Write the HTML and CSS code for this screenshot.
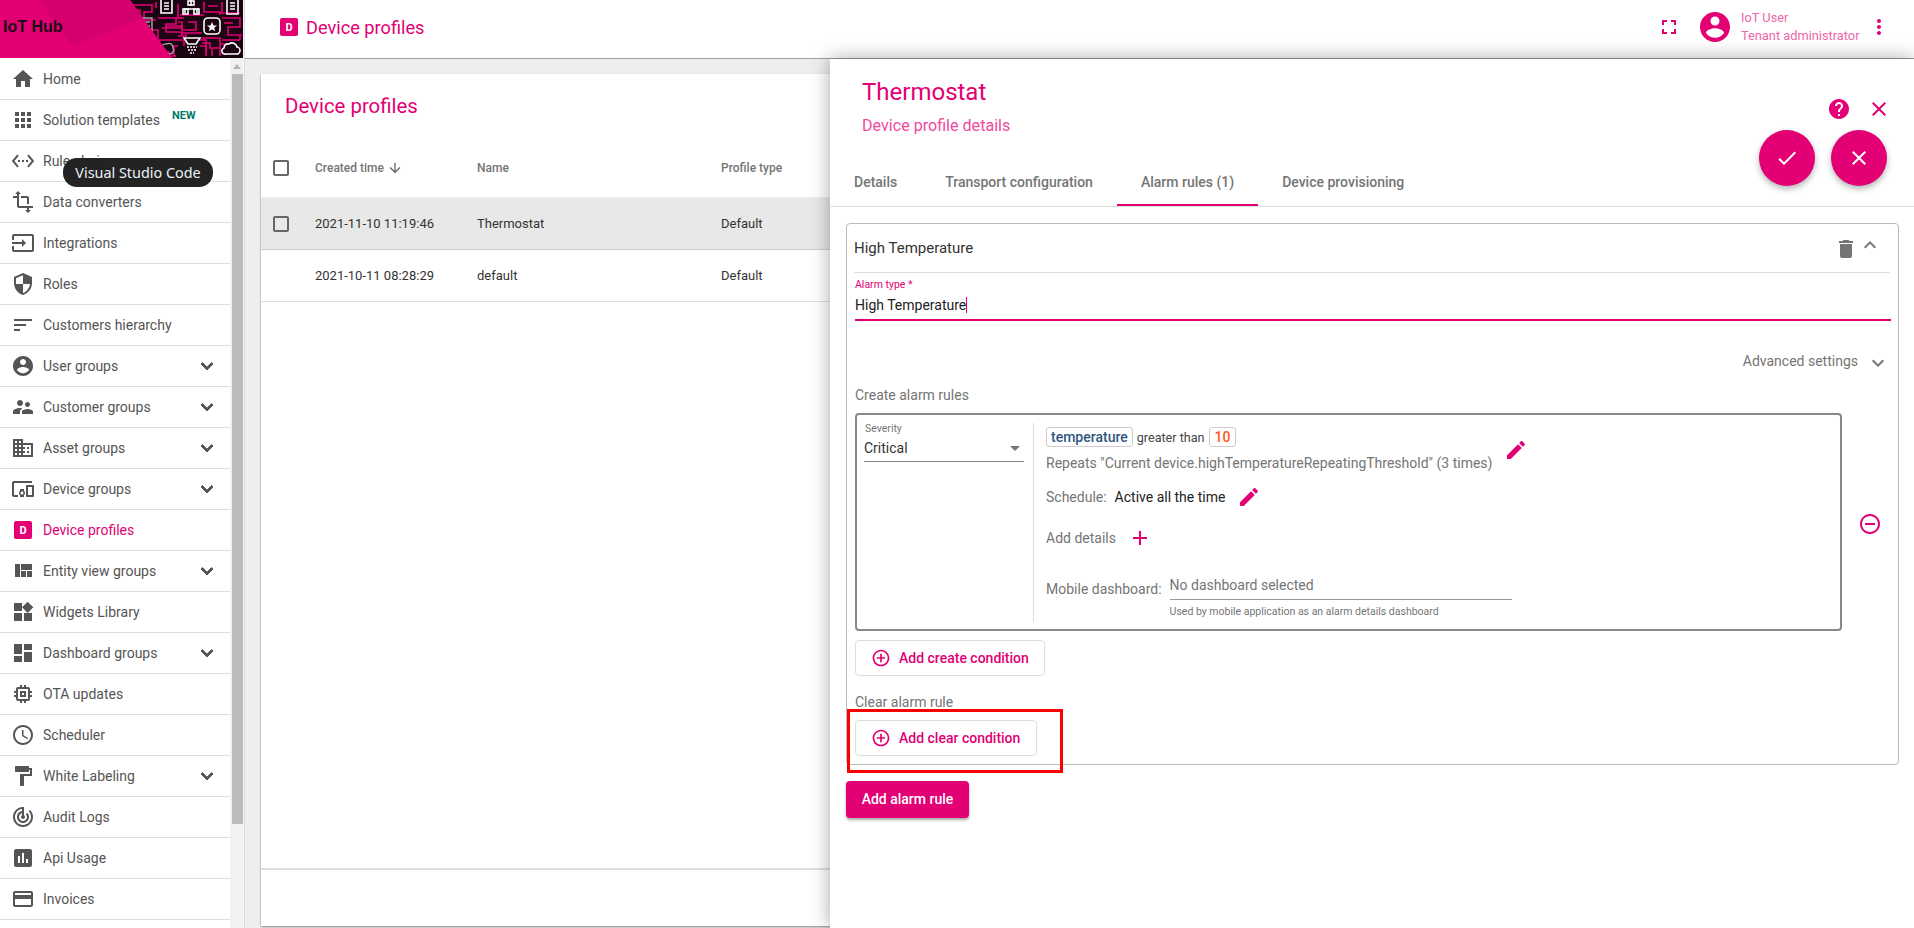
FILE: index.html
```html
<!doctype html>
<html>

<head>
    <meta charset="utf-8">
    <title>Device profiles</title>
    <link rel="stylesheet" href="styles.css">
</head>

<body>
    <svg class="sprite" xmlns="http://www.w3.org/2000/svg">
        <symbol id="i-home" viewBox="0 0 24 24"><path d="M10 20v-6h4v6h5v-8h3L12 3 2 12h3v8z"/></symbol>
        <symbol id="i-apps" viewBox="0 0 24 24"><path d="M4 8h4V4H4v4zm6 12h4v-4h-4v4zm-6 0h4v-4H4v4zm0-6h4v-4H4v4zm6 0h4v-4h-4v4zm6-10v4h4V4h-4zm-6 4h4V4h-4v4zm6 6h4v-4h-4v4zm0 6h4v-4h-4v4z"/></symbol>
        <symbol id="i-ethernet" viewBox="0 0 24 24"><path d="M7.77 6.76L6.23 5.48.82 12l5.41 6.52 1.54-1.28L3.42 12l4.35-5.24zM7 13h2v-2H7v2zm10-2h-2v2h2v-2zm-6 2h2v-2h-2v2zm6.77-7.52l-1.54 1.28L20.58 12l-4.35 5.24 1.54 1.28L23.18 12l-5.41-6.52z"/></symbol>
        <symbol id="i-transform" viewBox="0 0 24 24"><path d="M22 18v-2H8V4h2L7 1 4 4h2v2H2v2h4v8c0 1.1.9 2 2 2h8v2h-2l3 3 3-3h-2v-2h4zM10 8h6v6h2V8c0-1.1-.9-2-2-2h-6v2z"/></symbol>
        <symbol id="i-input" viewBox="0 0 24 24"><path d="M21 3.01H3c-1.1 0-2 .9-2 2V9h2V4.99h18v14.03H3V15H1v4.01c0 1.1.9 1.98 2 1.98h18c1.1 0 2-.88 2-1.98v-14c0-1.11-.9-2-2-2zM11 16l4-4-4-4v3H1v2h10v3z"/></symbol>
        <symbol id="i-security" viewBox="0 0 24 24"><path d="M12 1L3 5v6c0 5.55 3.84 10.74 9 12 5.16-1.26 9-6.45 9-12V5l-9-4zm0 10.99h7c-.53 4.12-3.28 7.79-7 8.94V12H5V6.3l7-3.11v8.8z"/></symbol>
        <symbol id="i-sort" viewBox="0 0 24 24"><path d="M3 18h6v-2H3v2zM3 6v2h18V6H3zm0 7h12v-2H3v2z"/></symbol>
        <symbol id="i-account" viewBox="0 0 24 24"><path d="M12 2C6.48 2 2 6.48 2 12s4.48 10 10 10 10-4.48 10-10S17.52 2 12 2zm0 3c1.66 0 3 1.34 3 3s-1.34 3-3 3-3-1.34-3-3 1.34-3 3-3zm0 14.2c-2.5 0-4.71-1.28-6-3.22.03-1.99 4-3.08 6-3.08 1.99 0 5.97 1.09 6 3.08-1.29 1.94-3.5 3.22-6 3.22z"/></symbol>
        <symbol id="i-people" viewBox="0 0 24 24"><path d="M16.5 12c1.38 0 2.49-1.12 2.49-2.5S17.88 7 16.5 7C15.12 7 14 8.12 14 9.5s1.12 2.5 2.5 2.5zM9 11c1.66 0 2.99-1.34 2.99-3S10.66 5 9 5C7.34 5 6 6.34 6 8s1.34 3 3 3zm7.5 3c-1.83 0-5.5.92-5.5 2.75V19h11v-2.25c0-1.83-3.67-2.75-5.5-2.75zM9 13c-2.33 0-7 1.17-7 3.5V19h7v-2.25c0-.85.33-2.34 2.37-3.47C10.5 13.1 9.66 13 9 13z"/></symbol>
        <symbol id="i-domain" viewBox="0 0 24 24"><path d="M12 7V3H2v18h20V7H10zM6 19H4v-2h2v2zm0-4H4v-2h2v2zm0-4H4V9h2v2zm0-4H4V5h2v2zm4 12H8v-2h2v2zm0-4H8v-2h2v2zm0-4H8V9h2v2zm0-4H8V5h2v2zm10 12h-8v-2h2v-2h-2v-2h2v-2h-2V9h8v10zm-2-8h-2v2h2v-2zm0 4h-2v2h2v-2z"/></symbol>
        <symbol id="i-devices" viewBox="0 0 24 24"><path d="M3 6h18V4H3c-1.1 0-2 .9-2 2v12c0 1.1.9 2 2 2h4v-2H3V6zm10 6H9v1.78c-.61.55-1 1.33-1 2.22s.39 1.67 1 2.22V20h4v-1.78c.61-.55 1-1.34 1-2.22s-.39-1.67-1-2.22V12zm-2 5.5c-.83 0-1.5-.67-1.5-1.5s.67-1.5 1.5-1.5 1.5.67 1.5 1.5-.67 1.5-1.5 1.5zM22 8h-6c-.5 0-1 .5-1 1v10c0 .5.5 1 1 1h6c.5 0 1-.5 1-1V9c0-.5-.5-1-1-1zm-1 10h-4v-8h4v8z"/></symbol>
        <symbol id="i-quilt" viewBox="0 0 24 24"><path d="M10 18h5v-6h-5v6zm-6 0h5V5H4v13zm12 0h5v-6h-5v6zM10 5v6h11V5H10z"/></symbol>
        <symbol id="i-widgets" viewBox="0 0 24 24"><path d="M13 13v8h8v-8h-8zM3 21h8v-8H3v8zM3 3v8h8V3H3zm13.66-1.31L11 7.34 16.66 13l5.66-5.66-5.66-5.65z"/></symbol>
        <symbol id="i-dashboard" viewBox="0 0 24 24"><path d="M3 13h8V3H3v10zm0 8h8v-6H3v6zm10 0h8V11h-8v10zm0-18v6h8V3h-8z"/></symbol>
        <symbol id="i-memory" viewBox="0 0 24 24"><path d="M15 9H9v6h6V9zm-2 4h-2v-2h2v2zm8-2V9h-2V7c0-1.1-.9-2-2-2h-2V3h-2v2h-2V3H9v2H7c-1.1 0-2 .9-2 2v2H3v2h2v2H3v2h2v2c0 1.1.9 2 2 2h2v2h2v-2h2v2h2v-2h2c1.1 0 2-.9 2-2v-2h2v-2h-2v-2h2zm-4 6H7V7h10v10z"/></symbol>
        <symbol id="i-schedule" viewBox="0 0 24 24"><path d="M11.99 2C6.47 2 2 6.48 2 12s4.47 10 9.99 10C17.52 22 22 17.52 22 12S17.52 2 11.99 2zM12 20c-4.42 0-8-3.58-8-8s3.58-8 8-8 8 3.58 8 8-3.58 8-8 8zm.5-13H11v6l5.25 3.15.75-1.23-4.5-2.67z"/></symbol>
        <symbol id="i-paint" viewBox="0 0 24 24"><path d="M18 4V3c0-.55-.45-1-1-1H5c-.55 0-1 .45-1 1v4c0 .55.45 1 1 1h12c.55 0 1-.45 1-1V6h1v4H9v11c0 .55.45 1 1 1h2c.55 0 1-.45 1-1v-9h8V4h-3z"/></symbol>
        <symbol id="i-track" viewBox="0 0 24 24"><path d="M19.07 4.93l-1.41 1.41C19.1 7.79 20 9.79 20 12c0 4.42-3.58 8-8 8s-8-3.58-8-8c0-4.08 3.05-7.44 7-7.93v2.02C8.16 6.57 6 9.03 6 12c0 3.31 2.69 6 6 6s6-2.69 6-6c0-1.66-.67-3.16-1.76-4.24l-1.41 1.41C15.55 9.9 16 10.9 16 12c0 2.21-1.79 4-4 4s-4-1.79-4-4c0-1.86 1.28-3.41 3-3.86v2.14c-.6.35-1 .98-1 1.72 0 1.1.9 2 2 2s2-.9 2-2c0-.74-.4-1.38-1-1.72V2h-1C6.48 2 2 6.48 2 12s4.48 10 10 10 10-4.48 10-10c0-2.76-1.12-5.26-2.93-7.07z"/></symbol>
        <symbol id="i-chart" viewBox="0 0 24 24"><path d="M19 3H5c-1.1 0-2 .9-2 2v14c0 1.1.9 2 2 2h14c1.1 0 2-.9 2-2V5c0-1.1-.9-2-2-2zM9 17H7v-7h2v7zm4 0h-2V7h2v10zm4 0h-2v-4h2v4z"/></symbol>
        <symbol id="i-card" viewBox="0 0 24 24"><path d="M20 4H4c-1.11 0-1.99.89-1.99 2L2 18c0 1.11.89 2 2 2h16c1.11 0 2-.89 2-2V6c0-1.11-.89-2-2-2zm0 14H4v-6h16v6zm0-10H4V6h16v2z"/></symbol>
        <symbol id="i-more" viewBox="0 0 24 24"><path d="M16.59 8.59L12 13.17 7.41 8.59 6 10l6 6 6-6z"/></symbol>
        <symbol id="i-less" viewBox="0 0 24 24"><path d="M12 8l-6 6 1.41 1.41L12 10.83l4.59 4.58L18 14z"/></symbol>
        <symbol id="i-full" viewBox="0 0 24 24"><path d="M7 14H5v5h5v-2H7v-3zm-2-4h2V7h3V5H5v5zm12 7h-3v2h5v-5h-2v3zM14 5v2h3v3h2V5h-5z"/></symbol>
        <symbol id="i-vert" viewBox="0 0 24 24"><path d="M12 8c1.1 0 2-.9 2-2s-.9-2-2-2-2 .9-2 2 .9 2 2 2zm0 2c-1.1 0-2 .9-2 2s.9 2 2 2 2-.9 2-2-.9-2-2-2zm0 6c-1.1 0-2 .9-2 2s.9 2 2 2 2-.9 2-2-.9-2-2-2z"/></symbol>
        <symbol id="i-help" viewBox="0 0 24 24"><path d="M12 2C6.48 2 2 6.48 2 12s4.48 10 10 10 10-4.48 10-10S17.52 2 12 2zm1 17h-2v-2h2v2zm2.07-7.75l-.9.92C13.45 12.9 13 13.5 13 15h-2v-.5c0-1.1.45-2.1 1.17-2.83l1.24-1.26c.37-.36.59-.86.59-1.41 0-1.1-.9-2-2-2s-2 .9-2 2H8c0-2.21 1.79-4 4-4s4 1.79 4 4c0 .88-.36 1.68-.93 2.25z"/></symbol>
        <symbol id="i-close" viewBox="0 0 24 24"><path d="M19 6.41L17.59 5 12 10.59 6.41 5 5 6.41 10.59 12 5 17.59 6.41 19 12 13.41 17.59 19 19 17.59 13.41 12z"/></symbol>
        <symbol id="i-check" viewBox="0 0 24 24"><path d="M9 16.17L4.83 12l-1.42 1.41L9 19 21 7l-1.41-1.41z"/></symbol>
        <symbol id="i-delete" viewBox="0 0 24 24"><path d="M6 19c0 1.1.9 2 2 2h8c1.1 0 2-.9 2-2V7H6v12zM19 4h-3.5l-1-1h-5l-1 1H5v2h14V4z"/></symbol>
        <symbol id="i-edit" viewBox="0 0 24 24"><path d="M3 17.25V21h3.75L17.81 9.94l-3.75-3.75L3 17.25zM20.71 7.04c.39-.39.39-1.02 0-1.41l-2.34-2.34c-.39-.39-1.02-.39-1.41 0l-1.83 1.83 3.75 3.75 1.83-1.83z"/></symbol>
        <symbol id="i-add" viewBox="0 0 24 24"><path d="M19 13h-6v6h-2v-6H5v-2h6V5h2v6h6v2z"/></symbol>
        <symbol id="i-add-circle" viewBox="0 0 24 24"><path d="M13 7h-2v4H7v2h4v4h2v-4h4v-2h-4V7zm-1-5C6.48 2 2 6.48 2 12s4.48 10 10 10 10-4.48 10-10S17.52 2 12 2zm0 18c-4.41 0-8-3.59-8-8s3.59-8 8-8 8 3.59 8 8-3.59 8-8 8z"/></symbol>
        <symbol id="i-remove-circle" viewBox="0 0 24 24"><path d="M7 11v2h10v-2H7zm5-9C6.48 2 2 6.48 2 12s4.48 10 10 10 10-4.48 10-10S17.52 2 12 2zm0 18c-4.41 0-8-3.59-8-8s3.59-8 8-8 8 3.59 8 8-3.59 8-8 8z"/></symbol>
        <symbol id="i-down" viewBox="0 0 24 24"><path d="M20 12l-1.41-1.41L13 16.17V4h-2v12.17l-5.58-5.59L4 12l8 8 8-8z"/></symbol>
    </svg>

    <aside class="sidebar">
        <div class="logo">
            <svg class="logo-art" viewBox="0 0 243 58" xmlns="http://www.w3.org/2000/svg">
                <rect width="243" height="58" fill="#1c0512"/>
                <g fill="none" stroke="#e20074" stroke-width="1.6">
                    <path d="M130 5h22v7h-8v8h12M128 10h12v14h-4M158 18h18v6h-10v8h14M134 30h24v8h-14v8h16"/>
                    <path d="M178 4v14h6M178 22h4v8h14v-8h-8M178 36h8v-2M162 28h20M180 15h24M176 40h8v6M158 40h18"/>
                    <path d="M204 2v10h18M208 6h10M222 18h18v9h-12v8h14M224 23h9M222 40h18M226 44h-6v12M202 38h18v10h-8v8"/>
                    <path d="M176 18h6M166 26h16v10M180 33h22M198 40h8v14M136 52h34M146 56h30M202 43h8v6"/>
                    <path d="M178 46h-4v10M200 46h6v10M220 15v-2h20M156 2v6M222 2v10M240 36v4"/>
                </g>
                <g fill="none" stroke="#fff" stroke-width="1.6">
                    <path d="M161 0v13h11V0M164 3h5M164 6h5M164 9h5"/>
                    <path d="M227 0v14h11V0M230 3h5M230 6h5M230 9h5"/>
                    <path d="M191 0v6M185 13v-4h12v4"/>
                    <rect x="183" y="9" width="5" height="5"/>
                    <rect x="194" y="9" width="5" height="5"/>
                    <rect x="188" y="1" width="6" height="4"/>
                    <rect x="204" y="18" width="16" height="16" rx="4"/>
                    <path d="M184 38h16l-4 6h-8z"/>
                    <path d="M187 47h10M188 50h8M190 53h4" stroke-dasharray="2 1"/>
                    <path d="M226 54h10a3.500 3.500 0 0 0 1-7 5 5 0 0 0-8-3 4 4 0 0 0-5 4 3 3 0 0 0 2 6z"/>
                </g>
                <g fill="none" stroke="#a8a8a8" stroke-width="1.4">
                    <path d="M142 18h10v16h-10M145 22h5M145 26h5"/>
                    <path d="M162 52a5 5 0 0 1 5-8 4 4 0 0 1 6 4 4 4 0 0 1-3 6z"/>
                </g>
                <path d="M212 22l1.500 3.500h3.500l-2.800 2.300 1 3.500-3.200-2-3.200 2 1-3.500-2.800-2.300h3.500z" fill="#fff"/>
                <polygon points="0,0 130,0 172,58 0,58" fill="#e20074"/>
                <polygon points="40,0 130,0 143,18 72,46" fill="#d5006d"/>
            </svg>
            <span class="logo-name">IoT Hub</span>
        </div>
        <div class="side-scroll">
            <ul class="menu">
                <li class="menu-item"><svg class="icon"><use href="#i-home"/></svg><span>Home</span></li>
                <li class="menu-item"><svg class="icon"><use href="#i-apps"/></svg><span>Solution templates</span><em class="new-badge">NEW</em></li>
                <li class="menu-item"><svg class="icon"><use href="#i-ethernet"/></svg><span>Rule chains</span></li>
                <li class="menu-item"><svg class="icon"><use href="#i-transform"/></svg><span>Data converters</span></li>
                <li class="menu-item"><svg class="icon"><use href="#i-input"/></svg><span>Integrations</span></li>
                <li class="menu-item"><svg class="icon"><use href="#i-security"/></svg><span>Roles</span></li>
                <li class="menu-item"><svg class="icon"><use href="#i-sort"/></svg><span>Customers hierarchy</span></li>
                <li class="menu-item"><svg class="icon"><use href="#i-account"/></svg><span>User groups</span><svg class="icon menu-arrow"><use href="#i-more"/></svg></li>
                <li class="menu-item"><svg class="icon"><use href="#i-people"/></svg><span>Customer groups</span><svg class="icon menu-arrow"><use href="#i-more"/></svg></li>
                <li class="menu-item"><svg class="icon"><use href="#i-domain"/></svg><span>Asset groups</span><svg class="icon menu-arrow"><use href="#i-more"/></svg></li>
                <li class="menu-item"><svg class="icon"><use href="#i-devices"/></svg><span>Device groups</span><svg class="icon menu-arrow"><use href="#i-more"/></svg></li>
                <li class="menu-item active"><span class="icon-box"><b class="d-icon">D</b></span><span>Device profiles</span></li>
                <li class="menu-item"><svg class="icon"><use href="#i-quilt"/></svg><span>Entity view groups</span><svg class="icon menu-arrow"><use href="#i-more"/></svg></li>
                <li class="menu-item"><svg class="icon"><use href="#i-widgets"/></svg><span>Widgets Library</span></li>
                <li class="menu-item"><svg class="icon"><use href="#i-dashboard"/></svg><span>Dashboard groups</span><svg class="icon menu-arrow"><use href="#i-more"/></svg></li>
                <li class="menu-item"><svg class="icon"><use href="#i-memory"/></svg><span>OTA updates</span></li>
                <li class="menu-item"><svg class="icon"><use href="#i-schedule"/></svg><span>Scheduler</span></li>
                <li class="menu-item"><svg class="icon"><use href="#i-paint"/></svg><span>White Labeling</span><svg class="icon menu-arrow"><use href="#i-more"/></svg></li>
                <li class="menu-item"><svg class="icon"><use href="#i-track"/></svg><span>Audit Logs</span></li>
                <li class="menu-item"><svg class="icon"><use href="#i-chart"/></svg><span>Api Usage</span></li>
                <li class="menu-item"><svg class="icon"><use href="#i-card"/></svg><span>Invoices</span></li>
            </ul>
            <div class="scrollbar">
                <div class="scroll-up"></div>
                <div class="scroll-thumb"></div>
            </div>
        </div>
    </aside>

    <div class="tooltip">Visual Studio Code</div>

    <main class="main">
        <header class="topbar">
            <b class="d-icon">D</b>
            <span class="topbar-title">Device profiles</span>
            <div class="topbar-right">
                <svg class="icon"><use href="#i-full"/></svg>
                <svg class="icon avatar"><use href="#i-account"/></svg>
                <div class="user">
                    <div>IoT User</div>
                    <div>Tenant administrator</div>
                </div>
                <svg class="icon"><use href="#i-vert"/></svg>
            </div>
        </header>

        <div class="content">
            <section class="table-card">
                <h2 class="table-title">Device profiles</h2>
                <div class="t-row t-head">
                    <div class="c-check"><i class="checkbox"></i></div>
                    <div class="c-time">Created time <svg class="sort-arrow"><use href="#i-down"/></svg></div>
                    <div class="c-name">Name</div>
                    <div class="c-type">Profile type</div>
                </div>
                <div class="t-row selected">
                    <div class="c-check"><i class="checkbox"></i></div>
                    <div class="c-time">2021-11-10 11:19:46</div>
                    <div class="c-name">Thermostat</div>
                    <div class="c-type">Default</div>
                </div>
                <div class="t-row">
                    <div class="c-check"></div>
                    <div class="c-time">2021-10-11 08:28:29</div>
                    <div class="c-name">default</div>
                    <div class="c-type">Default</div>
                </div>
                <div class="table-foot"></div>
            </section>
        </div>

        <section class="panel">
            <div class="panel-titles">
                <h1>Thermostat</h1>
                <p>Device profile details</p>
            </div>
            <div class="panel-actions">
                <div class="action-icons">
                    <svg class="icon"><use href="#i-help"/></svg>
                    <svg class="icon"><use href="#i-close"/></svg>
                </div>
                <div class="fabs">
                    <div class="fab"><svg class="icon"><use href="#i-check"/></svg></div>
                    <div class="fab"><svg class="icon"><use href="#i-close"/></svg></div>
                </div>
            </div>
            <nav class="tabs">
                <div class="tab">Details</div>
                <div class="tab">Transport configuration</div>
                <div class="tab active">Alarm rules (1)</div>
                <div class="tab">Device provisioning</div>
            </nav>

            <div class="panel-body">
                <div class="rule">
                    <div class="rule-head">
                        <span>High Temperature</span>
                        <svg class="icon trash"><use href="#i-delete"/></svg>
                        <svg class="icon collapse"><use href="#i-less"/></svg>
                    </div>
                    <div class="rule-body">
                        <label class="float-label">Alarm type *</label>
                        <div class="alarm-input"><span class="caret">High Temperature</span></div>
                        <div class="advanced">Advanced settings <svg class="icon"><use href="#i-more"/></svg></div>
                        <div class="section-label create-label">Create alarm rules</div>

                        <div class="cond-row">
                            <div class="cond-box">
                                <div class="severity">
                                    <div class="small-label">Severity</div>
                                    <div class="select">Critical<i class="select-arrow"></i></div>
                                </div>
                                <div class="cond-main">
                                    <div class="cond-top">
                                        <div class="cond-text">
                                            <div class="filter">
                                                <span class="chip key">temperature</span>
                                                <span class="op">greater than</span>
                                                <span class="chip val">10</span>
                                            </div>
                                            <div class="repeats">Repeats "Current device.highTemperatureRepeatingThreshold" (3 times)</div>
                                        </div>
                                        <svg class="icon pink"><use href="#i-edit"/></svg>
                                    </div>
                                    <div class="line schedule">
                                        <span class="muted">Schedule:</span>
                                        <span class="sched-val">Active all the time</span>
                                        <svg class="icon pink"><use href="#i-edit"/></svg>
                                    </div>
                                    <div class="line details">
                                        <span class="muted">Add details</span>
                                        <svg class="icon pink"><use href="#i-add"/></svg>
                                    </div>
                                    <div class="mobile">
                                        <span class="muted mobile-label">Mobile dashboard:</span>
                                        <div class="mobile-field">
                                            <div class="mobile-input">No dashboard selected</div>
                                            <div class="hint">Used by mobile application as an alarm details dashboard</div>
                                        </div>
                                    </div>
                                </div>
                            </div>
                            <svg class="icon pink remove"><use href="#i-remove-circle"/></svg>
                        </div>

                        <div class="outline-btn create-btn"><svg class="icon"><use href="#i-add-circle"/></svg>Add create condition</div>
                        <div class="section-label clear-label">Clear alarm rule</div>
                        <div class="clear-wrap">
                            <div class="outline-btn"><svg class="icon"><use href="#i-add-circle"/></svg>Add clear condition</div>
                            <div class="highlight"></div>
                        </div>
                    </div>
                </div>
                <div class="add-rule">Add alarm rule</div>
            </div>
        </section>
    </main>
</body>

</html>
```
FILE: styles.css
```css
* {
    box-sizing: border-box;
}

html,
body {
    height: 100%;
}

body {
    margin: 0;
    display: flex;
    overflow: hidden;
    background: #eee;
    font-family: Roboto, "Liberation Sans", sans-serif;
    font-size: 14px;
    color: #333;
}

.sprite {
    display: none;
}

.icon {
    width: 24px;
    height: 24px;
    fill: currentColor;
    flex: none;
}

.pink {
    color: #e20074;
}

.d-icon {
    width: 18px;
    height: 18px;
    flex: none;
    display: flex;
    align-items: center;
    justify-content: center;
    border-radius: 2px;
    background: #e20074;
    color: #fff;
    font-size: 11px;
    font-weight: 700;
}

/* sidebar */
.sidebar {
    width: 245px;
    height: 928px;
    flex: none;
    background: #f6f6f6;
    border-right: 1px solid #ddd;
    overflow: hidden;
}

.logo {
    position: relative;
    width: 243px;
    height: 58px;
}

.logo-art {
    position: absolute;
    left: 0;
    top: 0;
    width: 243px;
    height: 58px;
    display: block;
}

.logo-name {
    position: absolute;
    left: 3px;
    top: 17px;
    font-size: 16px;
    line-height: 20px;
    font-weight: 700;
    font-family: "Liberation Sans", sans-serif;
    color: #1a0a12;
}

.side-scroll {
    display: flex;
    height: 870px;
}

.menu {
    width: 230px;
    height: 870px;
    margin: 0;
    padding: 1px 0 0;
    list-style: none;
    background: #fff;
}

.menu-item {
    height: 41px;
    display: flex;
    align-items: center;
    gap: 8px;
    padding: 0 11px;
    border-bottom: 1px solid #ddd;
    color: #555;
}

.menu-item.active {
    color: #e20074;
}

.icon-box {
    width: 24px;
    height: 24px;
    flex: none;
    display: flex;
    align-items: center;
    justify-content: center;
}

.new-badge {
    position: relative;
    top: -5px;
    margin-left: 4px;
    font-style: normal;
    font-size: 11px;
    font-weight: 700;
    color: #00796b;
}

.menu-arrow {
    margin-left: auto;
    stroke: currentColor;
    stroke-width: 1;
}

.scrollbar {
    width: 13px;
    background: #f1f1f1;
    padding-left: 2px;
}

.scroll-up {
    width: 0;
    margin: 6px 0 0 1px;
    border: 4px solid transparent;
    border-top: 0;
    border-bottom: 5px solid #b5b5b5;
}

.scroll-thumb {
    height: 750px;
    margin-top: 5px;
    background: #bbb;
}

.tooltip {
    position: absolute;
    left: 63px;
    top: 158px;
    width: 150px;
    height: 29px;
    z-index: 5;
    border-radius: 14px;
    background: #232323;
    color: #e9f2fa;
    font-family: "Noto Sans", sans-serif;
    font-size: 14.4px;
    line-height: 29px;
    text-align: center;
}

/* main area */
.main {
    position: relative;
    flex: 1;
    min-width: 0;
    display: flex;
    flex-direction: column;
}

.topbar {
    height: 59px;
    flex: none;
    display: flex;
    align-items: center;
    padding: 0 23px 4px 35px;
    background: #fff;
    border-bottom: 1px solid #9e9e9e;
    color: #e20074;
}

.topbar-title {
    margin-left: 8px;
    font-size: 18.2px;
}

.topbar-right {
    margin-left: auto;
    display: flex;
    align-items: center;
}

.avatar {
    width: 36px;
    height: 36px;
    margin-left: 16px;
}

.user {
    width: 126px;
    margin-left: 8px;
    font-size: 12.8px;
    line-height: 18px;
    color: #ee66ac;
}

.content {
    flex: 1;
    padding: 15px 16px 2px;
    display: flex;
}

.table-card {
    flex: 1;
    display: flex;
    flex-direction: column;
    background: #fff;
    box-shadow: 0 1px 2px rgba(0, 0, 0, .45);
}

.table-title {
    height: 64px;
    margin: 0;
    padding: 18px 0 0 24px;
    font-size: 20.4px;
    line-height: 28px;
    font-weight: 400;
    color: #e20074;
}

.t-row {
    height: 52px;
    display: flex;
    align-items: center;
    border-bottom: 1px solid #ddd;
    font-size: 13px;
    color: #333;
}

.t-head {
    height: 60px;
    font-size: 12px;
    font-weight: 500;
    color: #757575;
    border-bottom-color: #eee;
}

.selected {
    background: #e8e8e8;
    border-bottom-color: #ccc;
}

.c-check {
    width: 54px;
    padding-left: 12px;
}

.c-time {
    width: 162px;
    display: flex;
    align-items: center;
    gap: 3px;
}

.c-name {
    width: 244px;
}

.checkbox {
    display: block;
    width: 16px;
    height: 16px;
    border: 2px solid #666;
    border-radius: 2px;
}

.sort-arrow {
    width: 16px;
    height: 16px;
    fill: #666;
}

.table-foot {
    margin-top: auto;
    height: 58px;
    border-top: 2px solid #ddd;
}

/* details panel */
.panel {
    position: absolute;
    right: 0;
    top: 59px;
    bottom: 0;
    width: 1084px;
    background: #fff;
    box-shadow: 0 0 18px rgba(0, 0, 0, .35);
}

.panel-titles {
    padding: 17px 0 0 32px;
}

.panel-titles h1 {
    margin: 0;
    font-size: 24px;
    line-height: 32px;
    font-weight: 400;
    color: #e20074;
}

.panel-titles p {
    margin: 8px 0 0;
    font-size: 16.1px;
    line-height: 20px;
    color: #ef4a9e;
}

.panel-actions {
    position: absolute;
    right: 23px;
    top: 38px;
}

.action-icons {
    display: flex;
    justify-content: flex-end;
    gap: 16px;
    color: #e20074;
}

.fabs {
    display: flex;
    gap: 16px;
    margin-top: 9px;
    padding-right: 4px;
}

.fab {
    width: 56px;
    height: 56px;
    display: flex;
    align-items: center;
    justify-content: center;
    border-radius: 50%;
    background: #e20074;
    color: #fff;
    box-shadow: 0 3px 6px rgba(0, 0, 0, .3);
}

.tabs {
    display: flex;
    height: 49px;
    margin-top: 22px;
    border-bottom: 1px solid #ddd;
}

.tab {
    height: 48px;
    padding: 0 24px;
    line-height: 48px;
    font-weight: 500;
    color: #757575;
}

.tab.active {
    border-bottom: 2px solid #e20074;
}

.panel-body {
    padding: 16px 15px 16px 16px;
}

.rule {
    border: 1px solid #bbb;
    border-radius: 4px;
    background: #fff;
}

.rule-head {
    height: 49px;
    margin: 0 8px 0 7px;
    display: flex;
    align-items: center;
    border-bottom: 1px solid #ddd;
    font-size: 15px;
    color: #333;
}

.rule-head span {
    flex: 1;
}

.trash {
    margin-top: 2px;
    color: #757575;
}

.collapse {
    color: #757575;
    margin: 0 8px 6px 0;
}

.rule-body {
    padding: 6px 7px 8px 8px;
}

.float-label {
    display: block;
    font-size: 10.5px;
    line-height: 12px;
    color: #e20074;
}

.alarm-input {
    margin-top: 5px;
    padding-bottom: 5px;
    border-bottom: 2px solid #e20074;
    line-height: 18px;
    color: #222;
}

.caret {
    border-right: 1px solid #e20074;
}

.advanced {
    display: flex;
    align-items: center;
    justify-content: flex-end;
    gap: 8px;
    height: 24px;
    margin-top: 28px;
    padding-right: 1px;
    color: #757575;
}

.advanced .icon {
    margin-top: 3px;
}

.section-label {
    line-height: 20px;
    color: #757575;
}

.create-label {
    margin-top: 12px;
}

.clear-label {
    margin-top: 16px;
}

.cond-row {
    display: flex;
    align-items: center;
    margin-top: 8px;
}

.cond-box {
    width: 987px;
    height: 218px;
    padding: 8px 0 7px;
    display: flex;
    border: 2px solid #888;
    border-radius: 4px;
}

.remove {
    margin-left: 16px;
    margin-top: 3px;
}

.severity {
    width: 160px;
    margin: 0 8px 0 7px;
    flex: none;
}

.small-label {
    padding-left: 1px;
    font-size: 10.5px;
    line-height: 12px;
    color: #757575;
}

.select {
    display: flex;
    align-items: center;
    justify-content: space-between;
    margin-top: 4px;
    padding: 0 4px 4px 0;
    line-height: 18px;
    border-bottom: 1px solid #888;
    color: #333;
}

.select-arrow {
    border: 5px solid transparent;
    border-bottom: 0;
    border-top-color: #757575;
}

.cond-main {
    flex: 1;
    margin-left: 1px;
    padding: 4px 0 0 12px;
    border-left: 1px solid #ddd;
}

.cond-top {
    display: flex;
    align-items: center;
    gap: 12px;
}

.filter {
    display: flex;
    align-items: center;
    gap: 4px;
    height: 20px;
}

.chip {
    height: 20px;
    padding: 0 4px;
    line-height: 18px;
    border: 1px solid #ccc;
    border-radius: 3px;
    font-weight: 500;
}

.key {
    color: #305680;
}

.val {
    padding: 0 5px;
    color: #ff5722;
}

.op {
    font-size: 12.6px;
    color: #444;
}

.repeats {
    margin-top: 6px;
    line-height: 20px;
    color: #757575;
}

.line {
    display: flex;
    align-items: center;
    height: 24px;
}

.schedule {
    margin-top: 12px;
}

.details {
    margin-top: 17px;
}

.line .icon {
    margin-left: 12px;
}

.muted {
    color: #757575;
}

.sched-val {
    margin-left: 8px;
    color: #222;
}

.mobile {
    display: flex;
    margin-top: 26px;
}

.mobile-label {
    margin-top: 3px;
    line-height: 20px;
}

.mobile-field {
    width: 342px;
    margin-left: 8px;
}

.mobile-input {
    padding-bottom: 5px;
    line-height: 18px;
    border-bottom: 1px solid #999;
    color: #757575;
}

.hint {
    margin-top: 6px;
    font-size: 10.5px;
    line-height: 12px;
    color: #757575;
}

.outline-btn {
    display: inline-flex;
    align-items: center;
    gap: 8px;
    height: 36px;
    padding: 0 16px 0 15px;
    border: 1px solid #ddd;
    border-radius: 4px;
    background: #fff;
    font-weight: 500;
    color: #e20074;
    white-space: nowrap;
}

.outline-btn .icon {
    width: 20px;
    height: 20px;
}

.create-btn {
    display: flex;
    width: 190px;
    margin-top: 9px;
}

.clear-wrap {
    position: relative;
    width: 182px;
    height: 36px;
    margin-top: 8px;
}

.highlight {
    position: absolute;
    left: -8px;
    top: -11px;
    width: 216px;
    height: 64px;
    border: 3px solid #f00;
}

.add-rule {
    width: 123px;
    height: 37px;
    margin-top: 16px;
    border-radius: 4px;
    background: #e20074;
    color: #fff;
    font-weight: 500;
    line-height: 37px;
    text-align: center;
    box-shadow: 0 2px 3px rgba(0, 0, 0, .35);
}
```
